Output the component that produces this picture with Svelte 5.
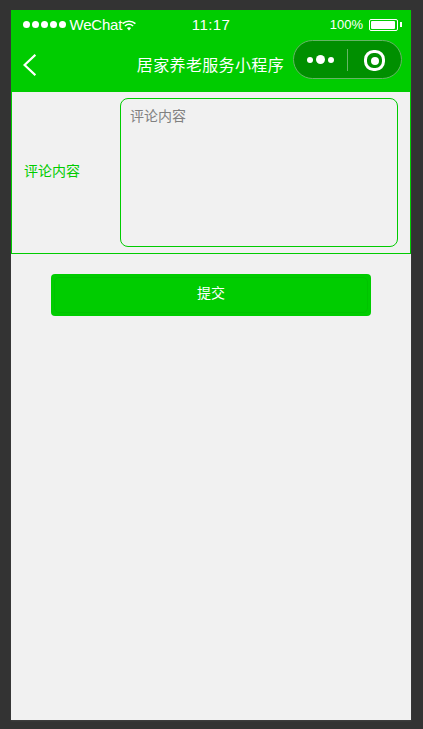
<script>
  const dots = [0, 1, 2, 3, 4];
</script>

<div class="device">
  <div class="phone">
    <header class="head">
      <div class="status">
        <div class="st-left">
          <div class="signal">
            {#each dots as d}<span class="sig"></span>{/each}
          </div>
          <span class="carrier">WeChat</span>
          <svg class="wifi" width="14" height="11" viewBox="0 0 14 11" fill="none" stroke="#fff">
            <path d="M0.6 3.6C4.2 0.4 9.8 0.4 13.4 3.6" stroke-width="1.6" />
            <path d="M2.9 6C5.3 4 8.7 4 11.1 6" stroke-width="1.6" />
            <path d="M4.9 8.1 7 10.6 9.1 8.1C7.9 7 6.1 7 4.9 8.1Z" fill="#fff" stroke="none" />
          </svg>
        </div>
        <span class="time">11:17</span>
        <div class="st-right">
          <span class="pct">100%</span>
          <div class="batt"><span class="batt-fill"></span></div>
          <span class="batt-tip"></span>
        </div>
      </div>
      <nav class="nav">
        <svg class="back" width="13" height="22" viewBox="0 0 13 22" fill="none" stroke="#fff" stroke-width="2.2">
          <path d="M12.4 0.8 1.6 11 12.4 21.2" />
        </svg>
        <span class="title">居家养老服务小程序</span>
        <div class="capsule">
          <div class="cap-l">
            <span class="d small"></span><span class="d big"></span><span class="d small"></span>
          </div>
          <span class="sep"></span>
          <div class="cap-r">
            <span class="ring"><span class="core"></span></span>
          </div>
        </div>
      </nav>
    </header>

    <form class="row" onsubmit={(e) => e.preventDefault()}>
      <span class="label">评论内容</span>
      <div class="area"><span class="ph">评论内容</span></div>
    </form>

    <div class="actions">
      <button class="submit" type="button">提交</button>
    </div>
  </div>
</div>

<style>
  :global(body) {
    margin: 0;
    background: #333;
  }
  .device {
    height: 729px;
    box-sizing: border-box;
    padding: 10px 12px 9px 11px;
    background: #333;
    font-family: "Noto Sans CJK SC", "Liberation Sans", sans-serif;
  }
  .phone {
    height: 710px;
    background: #f1f1f1;
    display: flex;
    flex-direction: column;
    box-shadow: 0 1px 2px rgba(255, 255, 255, 0.08);
  }
  .head {
    height: 81px;
    background: #00cc00;
    color: #fff;
    display: flex;
    flex-direction: column;
    flex: none;
  }
  .status {
    height: 29px;
    padding: 0 9px 0 12px;
    display: grid;
    grid-template-columns: 1fr auto 1fr;
    align-items: center;
    font-family: "Liberation Sans", sans-serif;
  }
  .st-left {
    display: flex;
    align-items: center;
  }
  .signal {
    display: flex;
    gap: 1.5px;
    margin-right: 3.5px;
  }
  .sig {
    width: 7.4px;
    height: 7.4px;
    border-radius: 50%;
    background: #fff;
  }
  .carrier {
    font-size: 15px;
    line-height: 29px;
    letter-spacing: -0.2px;
  }
  .wifi {
    margin-left: 0;
    margin-top: 1px;
  }
  .time {
    font-size: 15px;
    letter-spacing: 0.4px;
    margin-left: -3px;
    margin-top: -1px;
  }
  .st-right {
    display: flex;
    align-items: center;
    justify-content: flex-end;
  }
  .pct {
    font-size: 13px;
    margin-right: 6px;
  }
  .batt {
    width: 29px;
    height: 12px;
    border: 1px solid #fff;
    border-radius: 2px;
    padding: 1px;
    box-sizing: border-box;
  }
  .batt-fill {
    display: block;
    height: 100%;
    background: #fff;
    border-radius: 1px;
    margin-right: 1px;
  }
  .batt-tip {
    width: 2px;
    height: 5px;
    background: #fff;
    margin-left: 2px;
  }
  .nav {
    flex: 1;
    display: flex;
    align-items: flex-start;
    padding: 0 9px 0 12px;
  }
  .back {
    flex: none;
    margin-top: 15px;
  }
  .title {
    flex: 1;
    text-align: right;
    font-size: 16px;
    line-height: 24px;
    letter-spacing: 0.35px;
    margin: 13px 9px 0 0;
    white-space: nowrap;
  }
  .capsule {
    width: 109px;
    height: 39px;
    margin-top: 1px;
    box-sizing: border-box;
    border: 1px solid #66b566;
    border-radius: 20px;
    background: #008f00;
    display: flex;
    align-items: center;
    flex: none;
  }
  .cap-l {
    width: 53px;
    display: flex;
    justify-content: center;
    align-items: center;
    gap: 3px;
  }
  .d {
    background: #fff;
    border-radius: 50%;
  }
  .small {
    width: 6px;
    height: 6px;
  }
  .big {
    width: 9px;
    height: 9px;
  }
  .sep {
    width: 1px;
    height: 22px;
    background: #66b566;
  }
  .cap-r {
    flex: 1;
    display: flex;
    justify-content: center;
    padding-top: 2px;
  }
  .ring {
    width: 21px;
    height: 21px;
    box-sizing: border-box;
    border: 3.5px solid #fff;
    border-radius: 45%;
    display: flex;
    align-items: center;
    justify-content: center;
  }
  .core {
    width: 8px;
    height: 8px;
    border-radius: 50%;
    background: #fff;
  }
  .row {
    height: 163px;
    box-sizing: border-box;
    border: 1px solid #00cc00;
    display: flex;
    align-items: center;
    padding: 0 12px;
    margin: 0;
    flex: none;
  }
  .label {
    width: 96px;
    flex: none;
    font-size: 14px;
    line-height: 20px;
    color: #00cc00;
    margin-top: -5px;
  }
  .area {
    flex: 1;
    height: 149px;
    box-sizing: border-box;
    border: 1px solid #00cc00;
    border-radius: 8px;
    padding: 6px 9px;
  }
  .ph {
    display: block;
    font-size: 14px;
    line-height: 20px;
    color: #808080;
  }
  .actions {
    padding: 20px 40px 0;
    display: flex;
  }
  .submit {
    position: relative;
    flex: 1;
    height: 42px;
    border: 0;
    border-radius: 4px;
    background: #00cc00;
    color: #fff;
    font: inherit;
    font-size: 14px;
    padding: 0 0 7px;
  }
  .submit::after {
    content: "";
    position: absolute;
    inset: 3px;
    border: 1px solid #00c300;
    border-radius: 5px;
  }
</style>
